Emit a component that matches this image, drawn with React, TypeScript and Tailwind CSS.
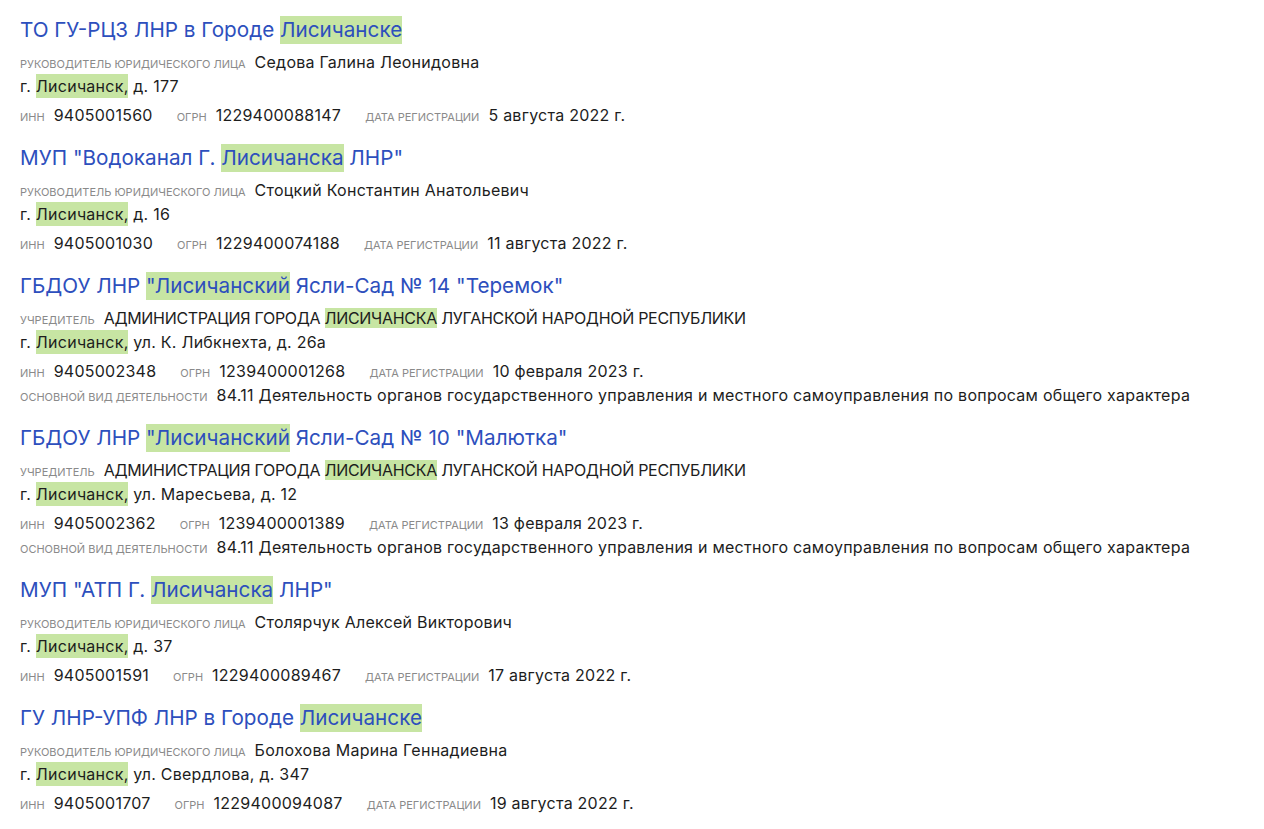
import React from "react";

type Part = string | { hl: string };

type Org = {
  title: Part[];
  personLabel: string;
  person: Part[];
  address: string;
  inn: string;
  ogrn: string;
  date: string;
  activity?: string;
};

const ACT =
  "84.11 Деятельность органов государственного управления и местного самоуправления по вопросам общего характера";

const orgs: Org[] = [
  {
    title: ["ТО ГУ-РЦЗ ЛНР в Городе ", { hl: "Лисичанске" }],
    personLabel: "руководитель юридического лица",
    person: ["Седова Галина Леонидовна"],
    address: "д. 177",
    inn: "9405001560",
    ogrn: "1229400088147",
    date: "5 августа 2022 г.",
  },
  {
    title: ['МУП "Водоканал Г. ', { hl: "Лисичанска" }, ' ЛНР"'],
    personLabel: "руководитель юридического лица",
    person: ["Стоцкий Константин Анатольевич"],
    address: "д. 16",
    inn: "9405001030",
    ogrn: "1229400074188",
    date: "11 августа 2022 г.",
  },
  {
    title: ["ГБДОУ ЛНР ", { hl: '"Лисичанский' }, ' Ясли-Сад № 14 "Теремок"'],
    personLabel: "учредитель",
    person: ["АДМИНИСТРАЦИЯ ГОРОДА ", { hl: "ЛИСИЧАНСКА" }, " ЛУГАНСКОЙ НАРОДНОЙ РЕСПУБЛИКИ"],
    address: "ул. К. Либкнехта, д. 26а",
    inn: "9405002348",
    ogrn: "1239400001268",
    date: "10 февраля 2023 г.",
    activity: ACT,
  },
  {
    title: ["ГБДОУ ЛНР ", { hl: '"Лисичанский' }, ' Ясли-Сад № 10 "Малютка"'],
    personLabel: "учредитель",
    person: ["АДМИНИСТРАЦИЯ ГОРОДА ", { hl: "ЛИСИЧАНСКА" }, " ЛУГАНСКОЙ НАРОДНОЙ РЕСПУБЛИКИ"],
    address: "ул. Маресьева, д. 12",
    inn: "9405002362",
    ogrn: "1239400001389",
    date: "13 февраля 2023 г.",
    activity: ACT,
  },
  {
    title: ['МУП "АТП Г. ', { hl: "Лисичанска" }, ' ЛНР"'],
    personLabel: "руководитель юридического лица",
    person: ["Столярчук Алексей Викторович"],
    address: "д. 37",
    inn: "9405001591",
    ogrn: "1229400089467",
    date: "17 августа 2022 г.",
  },
  {
    title: ["ГУ ЛНР-УПФ ЛНР в Городе ", { hl: "Лисичанске" }],
    personLabel: "руководитель юридического лица",
    person: ["Болохова Марина Геннадиевна"],
    address: "ул. Свердлова, д. 347",
    inn: "9405001707",
    ogrn: "1229400094087",
    date: "19 августа 2022 г.",
  },
];

const Parts = ({ parts }: { parts: Part[] }) => (
  <>
    {parts.map((p, i) =>
      typeof p === "string" ? (
        <span key={i} className="whitespace-pre">{p}</span>
      ) : (
        <span key={i} className="bg-[#c7e5a3] whitespace-pre">
          {p.hl}
        </span>
      )
    )}
  </>
);

const Label = ({ children }: { children: React.ReactNode }) => (
  <span className="text-[11px] uppercase text-[#8a8a8a] tracking-normal mr-[9px]">
    {children}
  </span>
);

const row =
  "flex items-baseline h-[24px] leading-[24px] text-[16px] tracking-[0.25px] text-[#1d1d1d]";

const OrgCard = ({ org }: { org: Org }) => (
  <div className="mb-[17px]">
    <div className="flex h-[28px] items-baseline leading-[28px] text-[20.7px] text-[#2d4fbd]">
      <Parts parts={org.title} />
    </div>
    <div className={`mt-[6px] ${row}`}>
      <Label>{org.personLabel}</Label>
      {/* founder names come in caps, which run wider in this font */}
      <span className={org.personLabel === "учредитель" ? "tracking-[-0.3px]" : ""}>
        <Parts parts={org.person} />
      </span>
    </div>
    <div className={row}>
      <span className="whitespace-pre">г. </span>
      <span className="bg-[#c7e5a3]">Лисичанск,</span>
      <span className="whitespace-pre"> {org.address}</span>
    </div>
    <div className={`mt-[5px] gap-[24px] ${row}`}>
      <span>
        <Label>инн</Label>
        {org.inn}
      </span>
      <span>
        <Label>огрн</Label>
        {org.ogrn}
      </span>
      <span>
        <Label>дата регистрации</Label>
        {org.date}
      </span>
    </div>
    {org.activity && (
      <div className={row}>
        <Label>основной вид деятельности</Label>
        <span>{org.activity}</span>
      </div>
    )}
  </div>
);

export default function App() {
  return (
    <div className="min-h-screen bg-white px-[20px] pt-[16px] font-['Inter',sans-serif]">
      {orgs.map((o, i) => (
        <OrgCard key={i} org={o} />
      ))}
    </div>
  );
}
